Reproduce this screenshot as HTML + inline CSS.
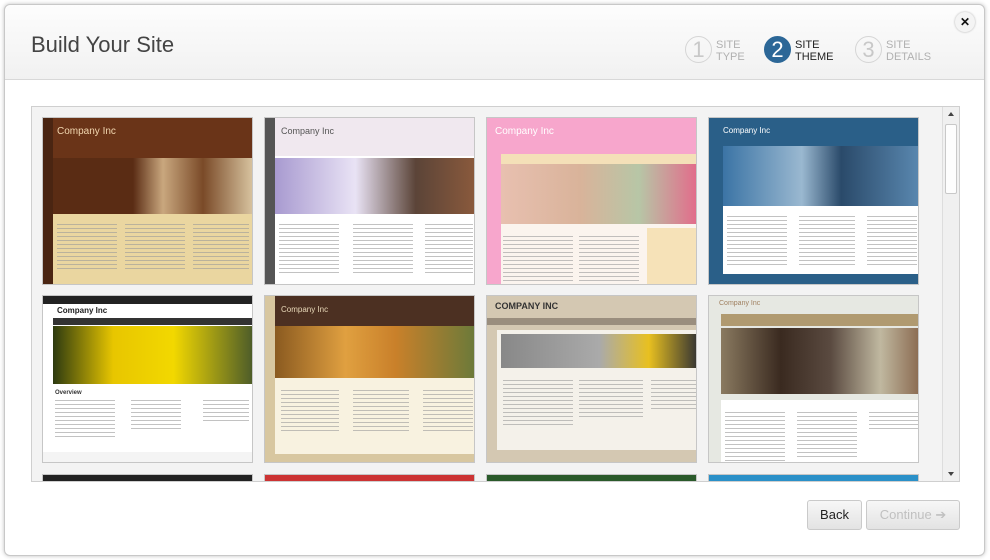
<!DOCTYPE html>
<html><head><style>
*{margin:0;padding:0;box-sizing:border-box}
body{width:990px;height:560px;background:#fff;font-family:"Liberation Sans",sans-serif;position:relative;overflow:hidden}
.dlg{position:absolute;left:4px;top:4px;width:981px;height:552px;border:1px solid #c8c8c8;border-radius:6px;background:#fff;box-shadow:0 0 4px rgba(0,0,0,.25)}
.hdr{position:absolute;left:0;top:0;width:100%;height:75px;background:linear-gradient(#fdfdfd,#f1f1f1);border-bottom:1px solid #d8d8d8;border-radius:6px 6px 0 0}
h1{position:absolute;left:26px;top:27px;font-size:22px;font-weight:normal;color:#444}
.step{position:absolute;top:31px;height:30px}
.step .c{position:absolute;left:0;top:0;width:27px;height:27px;border-radius:50%;border:1px solid #d5d5d5;color:#c8c8c8;font-size:22px;text-align:center;line-height:25px}
.step .lb{position:absolute;left:31px;top:3px;font-size:11px;line-height:12px;color:#b0b0b0;white-space:nowrap}
.step.on .c{background:#2c6797;border-color:#2c6797;color:#fff}
.step.on .lb{color:#222}
.x{position:absolute;left:955px;top:12px;width:20px;height:20px;border-radius:50%;background:#f4f4f4;box-shadow:0 0 2px rgba(0,0,0,.3);font-size:12px;font-weight:bold;text-align:center;line-height:20px;color:#111}
.gal{position:absolute;left:31px;top:106px;width:929px;height:376px;border:1px solid #cfcfcf;background:#f3f3f3;overflow:hidden}
.sb{position:absolute;right:0;top:0;width:17px;height:100%;background:#f0f0f0;border-left:1px solid #ddd}
.sb .th{position:absolute;left:2px;top:17px;width:12px;height:70px;background:#fdfdfd;border:1px solid #c8c8c8;border-radius:2px}
.t{position:absolute;width:211px;height:168px;border:1px solid #c6c6c6;overflow:hidden}
.t div{position:absolute}
.ln{background:repeating-linear-gradient(#9a9a9a 0 1px,transparent 1px 4px);opacity:.6}
.btn{position:absolute;top:500px;height:30px;border:1px solid #cacaca;border-radius:3px;background:linear-gradient(#f7f7f7,#e3e3e3);font-size:13px;text-align:center;line-height:28px}
</style></head><body>
<div class="dlg">
<div class="hdr">
<h1>Build Your Site</h1>
<div class="step" style="left:680px"><div class="c">1</div><div class="lb">SITE<br>TYPE</div></div>
<div class="step on" style="left:759px"><div class="c">2</div><div class="lb">SITE<br>THEME</div></div>
<div class="step" style="left:850px"><div class="c">3</div><div class="lb">SITE<br>DETAILS</div></div>
</div>
</div>
<div class="x">✕</div>
<div class="gal">
<div class="t" style="left:10px;top:10px;background:#4a2512">
 <div style="left:10px;top:0;width:200px;height:74px;background:#6a3418"></div>
 <div style="left:14px;top:8px;font-size:10px;color:#f2d7b0">Company Inc</div>
 <div style="left:10px;top:40px;width:200px;height:56px;background:linear-gradient(90deg,#5a2c14 0 40%,#c9a77e 55%,#7a4a28 75%,#d8c4a0)"></div>
 <div style="left:10px;top:96px;width:200px;height:72px;background:#ead6a0"></div>
 <div class="ln" style="left:14px;top:106px;width:60px;height:48px"></div><div class="ln" style="left:82px;top:106px;width:60px;height:48px"></div><div class="ln" style="left:150px;top:106px;width:56px;height:48px"></div>
</div>
<div class="t" style="left:232px;top:10px;background:#fff">
 <div style="left:0;top:0;width:10px;height:168px;background:#555"></div>
 <div style="left:10px;top:0;width:201px;height:38px;background:#f0e8ef"></div>
 <div style="left:16px;top:8px;font-size:9px;color:#555">Company Inc</div>
 <div style="left:10px;top:40px;width:201px;height:56px;background:linear-gradient(90deg,#a89ad0,#e9e3f5 40%,#5b4438 70%,#8b5a3c)"></div>
 <div class="ln" style="left:14px;top:106px;width:60px;height:50px"></div><div class="ln" style="left:88px;top:106px;width:60px;height:50px"></div><div class="ln" style="left:160px;top:106px;width:48px;height:50px"></div>
</div>
<div class="t" style="left:454px;top:10px;background:#f7a6cc">
 <div style="left:8px;top:8px;font-size:10px;color:#fff">Company Inc</div>
 <div style="left:14px;top:36px;width:197px;height:10px;background:#f4e0b8"></div>
 <div style="left:14px;top:46px;width:197px;height:60px;background:linear-gradient(90deg,#e8c0b0,#d9b39a 40%,#b7c6a6 70%,#e36a8a)"></div>
 <div style="left:14px;top:106px;width:197px;height:62px;background:#fbf4ee"></div>
 <div class="ln" style="left:16px;top:118px;width:70px;height:46px"></div><div class="ln" style="left:92px;top:118px;width:60px;height:46px"></div>
 <div style="left:160px;top:110px;width:51px;height:58px;background:#f6e2b8"></div>
</div>
<div class="t" style="left:676px;top:10px;background:#2a5f88">
 <div style="left:14px;top:8px;font-size:8px;color:#fff">Company Inc</div>
 <div style="left:14px;top:28px;width:197px;height:60px;background:linear-gradient(90deg,#3b74a5,#9ab8d0 40%,#2a4a6a 60%,#5a88b0)"></div>
 <div style="left:14px;top:88px;width:197px;height:68px;background:#fff"></div>
 <div class="ln" style="left:18px;top:98px;width:60px;height:50px"></div><div class="ln" style="left:90px;top:98px;width:56px;height:50px"></div><div class="ln" style="left:158px;top:98px;width:50px;height:50px"></div>
</div>
<div class="t" style="left:10px;top:188px;background:#fff">
 <div style="left:0;top:0;width:211px;height:8px;background:#222"></div>
 <div style="left:14px;top:10px;font-size:8px;color:#222;font-weight:bold">Company Inc</div>
 <div style="left:10px;top:22px;width:201px;height:7px;background:#333"></div>
 <div style="left:10px;top:30px;width:201px;height:58px;background:linear-gradient(90deg,#2d3a10,#e8c600 30%,#f2d800 60%,#4a5a2a)"></div>
 <div style="left:12px;top:94px;font-size:6px;font-weight:bold;color:#333">Overview</div>
 <div class="ln" style="left:12px;top:104px;width:60px;height:40px"></div><div class="ln" style="left:88px;top:104px;width:50px;height:30px"></div><div class="ln" style="left:160px;top:104px;width:46px;height:24px"></div>
 <div style="left:0;top:156px;width:211px;height:12px;background:#f4f4f4"></div>
</div>
<div class="t" style="left:232px;top:188px;background:#d8c7a0">
 <div style="left:10px;top:0;width:201px;height:30px;background:#4c3022"></div>
 <div style="left:16px;top:9px;font-size:8px;color:#e8d8b8">Company Inc</div>
 <div style="left:10px;top:30px;width:201px;height:52px;background:linear-gradient(90deg,#8a5a20,#e0a040 35%,#c9802a 60%,#6a7a3a)"></div>
 <div style="left:10px;top:82px;width:201px;height:76px;background:#f8f2e0"></div>
 <div class="ln" style="left:16px;top:94px;width:58px;height:44px"></div><div class="ln" style="left:88px;top:94px;width:56px;height:44px"></div><div class="ln" style="left:158px;top:94px;width:50px;height:44px"></div>
</div>
<div class="t" style="left:454px;top:188px;background:#d4c8b2">
 <div style="left:8px;top:5px;font-size:9px;font-weight:bold;color:#333">COMPANY INC</div>
 <div style="left:0;top:22px;width:211px;height:7px;background:#9a8e7e"></div>
 <div style="left:10px;top:34px;width:201px;height:120px;background:#f4f1ea"></div>
 <div style="left:14px;top:38px;width:197px;height:34px;background:linear-gradient(90deg,#888,#aaa 50%,#e8c020 75%,#333)"></div>
 <div class="ln" style="left:16px;top:84px;width:70px;height:48px"></div><div class="ln" style="left:92px;top:84px;width:64px;height:40px"></div><div class="ln" style="left:164px;top:84px;width:46px;height:30px"></div>
</div>
<div class="t" style="left:676px;top:188px;background:#e6e8e2">
 <div style="left:10px;top:4px;font-size:7px;color:#a08060">Company Inc</div>
 <div style="left:12px;top:18px;width:199px;height:12px;background:#b09a70"></div>
 <div style="left:12px;top:32px;width:199px;height:66px;background:linear-gradient(90deg,#8a7a60,#3a2a20 30%,#5a4a40 55%,#c0b8a0 80%,#8a6a50)"></div>
 <div style="left:12px;top:104px;width:199px;height:64px;background:#fff"></div>
 <div class="ln" style="left:16px;top:116px;width:60px;height:50px"></div><div class="ln" style="left:88px;top:116px;width:60px;height:46px"></div><div class="ln" style="left:160px;top:116px;width:50px;height:20px"></div>
</div>
<div class="t" style="left:10px;top:367px;background:#222"></div>
<div class="t" style="left:232px;top:367px;background:#c33"></div>
<div class="t" style="left:454px;top:367px;background:#2a5a2a"></div>
<div class="t" style="left:676px;top:367px;background:#2a90c8"></div>
<div class="sb"><div class="th"></div><div style="position:absolute;left:5px;top:5px;border:3px solid transparent;border-bottom:4px solid #444;border-top:0"></div><div style="position:absolute;left:5px;bottom:5px;border:3px solid transparent;border-top:4px solid #444;border-bottom:0"></div></div>
</div>
<div class="btn" style="left:807px;width:55px;color:#222">Back</div>
<div class="btn" style="left:866px;width:94px;color:#c0c0c0">Continue ➔</div>
</body></html>
